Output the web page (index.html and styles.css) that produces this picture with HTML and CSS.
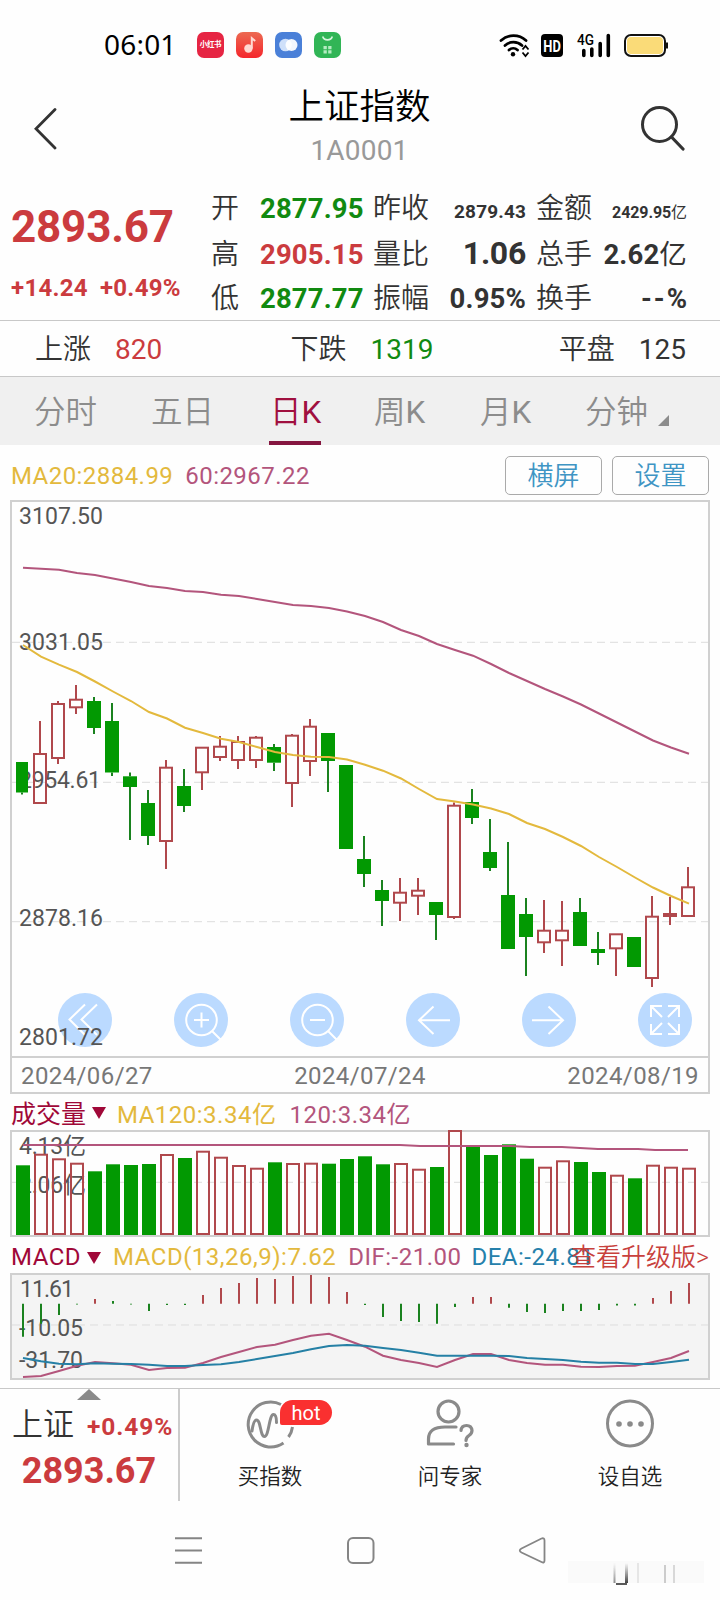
FILE: index.html
```html
<!DOCTYPE html>
<html lang="zh-CN">
<head>
<meta charset="utf-8">
<title>上证指数</title>
<link rel="stylesheet" href="styles.css">
</head>
<body>
<div class="screen">
  <div class="status">
    <span class="clock">06:01</span>
    <div class="apps">
      <span class="app app-red">小红书</span>
      <svg class="app-svg" viewBox="0 0 27 26"><defs><linearGradient id="mg" x2="0" y2="1"><stop offset="0" stop-color="#ec6a52"/><stop offset="1" stop-color="#f5262c"/></linearGradient></defs><rect width="27" height="26" rx="7" fill="url(#mg)"/><circle cx="12.4" cy="16.5" r="4.2" fill="#ffd9d2"/><path d="M15.8 16.5V6.2l3.4 2.8" fill="none" stroke="#ffd9d2" stroke-width="2"/></svg>
      <svg class="app-svg" viewBox="0 0 27 26"><rect width="27" height="26" rx="7" fill="#4a80d8"/><circle cx="10.5" cy="13" r="6.3" fill="#cfe0fa"/><circle cx="16.5" cy="13" r="6" fill="#fff" opacity=".93"/></svg>
      <svg class="app-svg" viewBox="0 0 27 26"><rect width="27" height="26" rx="7" fill="#31b556"/><path d="M8.7 4.5a5 4.6 0 0 0 9.6 0" fill="none" stroke="#d7f5de" stroke-width="1.7"/><path d="M9.5 14h3.3v3.3H9.5zM14.2 14h3.3v3.3h-3.3zM9.5 18.3h3.3v3.3H9.5zM14.2 18.3h3.3v3.3h-3.3z" fill="#b5ecc1"/></svg>
    </div>
    <svg class="signals" viewBox="498 30 172 28">
      <g fill="none" stroke="#000" stroke-width="2.8" stroke-linecap="round"><path d="M501 39.500a18.500 18.500 0 0 1 25 0M505 44.500a12.500 12.500 0 0 1 17 0M509 49a6.500 6.500 0 0 1 8.500 0"/></g>
      <circle cx="513" cy="53.300" r="2.200"/><path d="M522.500 48.500l3-3.500 3 3.500M522.500 51.500l3 3.500 3-3.500" fill="none" stroke="#000" stroke-width="1.800"/>
      <rect x="541" y="33" width="22" height="23" rx="4"/>
      <text x="543.300" y="50.500" font-size="16" font-weight="700" fill="#fff" textLength="17.500" lengthAdjust="spacingAndGlyphs">HD</text>
      <text x="577" y="43.500" font-size="14.500" font-weight="500" textLength="17" lengthAdjust="spacingAndGlyphs">4G</text>
      <path d="M583.800 49.500v5M591.800 48v6.500M600.200 42.500v12M608.300 34.500v20" stroke="#000" stroke-width="3.600" stroke-linecap="round"/>
      <rect x="625" y="34" width="40" height="21" rx="6" fill="#fff" stroke="#111" stroke-width="2"/><rect x="627" y="36" width="36" height="17" rx="4" fill="#fadb78"/><path d="M667 41.500v6" stroke="#111" stroke-width="2"/>
    </svg>
  </div>

  <header class="head">
    <svg class="back" viewBox="0 0 24 42"><path d="M21 1.500L2 20.800 21 40" fill="none" stroke="#333" stroke-width="2.800" stroke-linecap="round"/></svg>
    <div class="titles"><div class="title">上证指数</div><div class="code">1A0001</div></div>
    <svg class="search" viewBox="0 0 44 46"><circle cx="18.500" cy="18.500" r="17" fill="none" stroke="#333" stroke-width="3"/><path d="M30.500 31L42 43" stroke="#333" stroke-width="3.200" stroke-linecap="round"/></svg>
  </header>

  <section class="quote">
    <div class="price"><div class="last">2893.67</div><div class="change"><span>+14.24</span><span>+0.49%</span></div></div>
    <div class="stats">
      <span>开</span><b class="green">2877.95</b><span>昨收</span><b class="small">2879.43</b><span>金额</span><b class="tiny">2429.95<i>亿</i></b>
      <span>高</span><b class="red">2905.15</b><span>量比</span><b class="large">1.06</b><span>总手</span><b>2.62<i>亿</i></b>
      <span>低</span><b class="green">2877.77</b><span>振幅</span><b>0.95%</b><span>换手</span><b class="none">--%</b>
    </div>
  </section>

  <section class="breadth">
    <div><span>上涨</span><span class="count red">820</span></div>
    <div><span>下跌</span><span class="count green">1319</span></div>
    <div><span>平盘</span><span class="count">125</span></div>
  </section>

  <nav class="tabs">
    <span>分时</span><span>五日</span><span class="active">日<i>K</i></span><span>周<i>K</i></span><span>月<i>K</i></span><span>分钟<svg class="corner" viewBox="0 0 11 11"><path d="M11 0v11H0z" fill="#8c8c8c"/></svg></span>
  </nav>

  <div class="legend">
    <span class="gold">MA20:2884.99</span><span class="rose">60:2967.22</span>
    <div class="buttons"><span class="btn">横屏</span><span class="btn">设置</span></div>
  </div>

  <svg class="kline" viewBox="0 500 720 556">
    <path d="M12 642.300H708M12 782.300H708M12 921.700H708" class="grid"/>
    <g class="axis">
      <text x="19" y="524" textLength="84">3107.50</text><text x="19" y="650" textLength="84">3031.05</text><text x="19" y="787.700" textLength="82">2954.61</text><text x="19" y="926" textLength="84">2878.16</text>
    </g>
    <g id="candles"></g>
    <path id="ma60" class="line-rose"/><path id="ma20" class="line-gold"/>
    <g fill="#bbdaff"><circle cx="85" cy="1020" r="27"/><circle cx="201" cy="1020" r="27"/><circle cx="317" cy="1020" r="27"/><circle cx="433" cy="1020" r="27"/><circle cx="549" cy="1020" r="27"/><circle cx="665" cy="1020" r="27"/></g>
    <g fill="none" stroke="#fff" stroke-width="2">
      <path d="M85 1004.500L69.500 1019.500 85 1035M97 1004.500L81.500 1019.500 97 1035"/>
      <circle cx="201.500" cy="1020" r="15.300"/><path d="M212 1031l8.500 8.500M201.500 1012.500v15M194 1020h15"/>
      <circle cx="317.500" cy="1020" r="15.300"/><path d="M328 1031l8.500 8.500M310 1020h15"/>
      <path d="M433.500 1006.500L419 1020.300 433.500 1034M419 1020.300H450"/>
      <path d="M548.500 1006.500L563 1020.300 548.500 1034M563 1020.300H532"/>
      <path d="M651 1017v-11h11M651 1006l11 11M668 1006h11v11M679 1006l-11 11M651 1024v10h11M651 1034l11-11M668 1034h11v-10M679 1034l-11-11"/>
    </g>
    <g class="axis"><text x="19" y="1045" textLength="84">2801.72</text></g>
  </svg>
  <div class="dates"><span>2024/06/27</span><span>2024/07/24</span><span>2024/08/19</span></div>

  <div class="sub sub-vol"><span class="name name-vol">成交量</span><i class="down"></i><span class="gold vol-a">MA120:3.34亿</span><span class="rose">120:3.34亿</span></div>
  <svg class="volume" viewBox="0 1130 720 107">
    <path d="M12 1182.300H708" class="grid"/>
    <rect x="11" y="1131" width="698" height="105" class="frame"/>
    <g class="axis"><text x="19" y="1154" textLength="67">4.13亿</text><text x="19" y="1193" textLength="67">2.06亿</text></g>
    <g id="bars"></g>
    <path d="M23 1145H400L420 1146H510L530 1147H562L598 1149H638L655 1150H688" class="line-rose"/>
  </svg>

  <div class="sub sub-macd"><span class="name">MACD</span><i class="down"></i><span class="gold macd-a">MACD(13,26,9):7.62</span><span class="rose macd-b">DIF:-21.00</span><span class="blue">DEA:-24.81</span><span class="upgrade">查看升级版&gt;</span></div>
  <svg class="macd" viewBox="0 1273 720 107">
    <rect x="11" y="1274" width="698" height="105" fill="#f4f4f4"/>
    <path d="M12 1325H708" class="grid"/>
    <g class="axis"><text x="20" y="1296.700" textLength="54">11.61</text><text x="19" y="1336" textLength="64">-10.05</text><text x="19" y="1367.700" textLength="64">-31.70</text></g>
    <g id="hist"></g>
    <path id="dif" class="line-rose"/><path id="dea" class="line-blue"/>
    <rect x="11" y="1274" width="698" height="105" class="frame"/>
  </svg>

  <footer class="bottom">
    <div class="mini">
      <i class="up"></i>
      <div class="mini-top"><span>上证</span><b>+0.49%</b></div>
      <div class="mini-price">2893.67</div>
    </div>
    <div class="action">
      <svg viewBox="0 0 90 52"><g fill="none" stroke="#8a8a8a" stroke-width="3"><path d="M36 5.500A22.500 22.500 0 1 0 38.500 44M47.500 28a22 22 0 0 1-4 10"/><path d="M7 32c1-7 2.500-11 4.500-11 4.500 0 3.500 16.500 8 16.500S24 15.500 28.500 15.500c2 0 3 2.500 3 8" stroke-linecap="round"/></g></svg>
      <em class="hot">hot</em>
      <span>买指数</span>
    </div>
    <div class="action">
      <svg viewBox="0 0 90 52"><g fill="none" stroke="#8a8a8a" stroke-width="3.200" stroke-linecap="round" stroke-linejoin="round"><circle cx="23.500" cy="12.500" r="10.500"/><path d="M31 28H20Q3.500 28 3.500 40v5H28.500M36 31.500q.5-5 5.500-5t5.500 5q0 3-3 5t-3 5"/></g><circle cx="41.500" cy="46" r="2.200" fill="#8a8a8a"/></svg>
      <span>问专家</span>
    </div>
    <div class="action">
      <svg viewBox="0 0 90 52"><circle cx="25" cy="24.500" r="22.500" fill="none" stroke="#8a8a8a" stroke-width="3"/><g fill="#8a8a8a"><circle cx="14" cy="25" r="2.800"/><circle cx="25" cy="25" r="2.800"/><circle cx="36" cy="25" r="2.800"/></g></svg>
      <span>设自选</span>
    </div>
  </footer>

  <svg class="sysnav" viewBox="0 1501 720 99">
    <g fill="none" stroke="#858585" stroke-width="2"><path d="M175 1538.200h27M175 1550.500h27M175 1562.800h27"/><rect x="348" y="1538" width="25.500" height="25" rx="5"/><path d="M521.500 1548.500L541.500 1538.500Q544.500 1537.500 544.500 1540.500V1560.500Q544.500 1563.500 541.500 1562L521.500 1552.500Q518 1550.500 521.500 1548.500z" stroke-width="1.800"/></g>
    <defs><filter id="soft"><feGaussianBlur stdDeviation=".7"/></filter><linearGradient id="fade" x2="0" y2="1"><stop offset="0" stop-color="#555" stop-opacity="0"/><stop offset="1" stop-color="#444"/></linearGradient></defs>
    <rect x="568" y="1561" width="136" height="22" fill="#fafafa"/>
    <g filter="url(#soft)"><rect x="613.500" y="1563" width="2" height="20" fill="url(#fade)" opacity=".6"/><rect x="625" y="1563" width="3" height="20" fill="url(#fade)"/><rect x="637" y="1563" width="2" height="20" fill="#e6e6e6"/><rect x="664" y="1565" width="2" height="18" fill="#ccc"/><rect x="673" y="1565" width="2" height="18" fill="#d8d8d8"/></g>
    <path d="M616 1584h11" stroke="#222" stroke-width="1.500"/>
  </svg>
</div>
<script src="chart.js"></script>
</body>
</html>
```

FILE: styles.css
```css
* { box-sizing: border-box; }
body { margin: 0; background: #fff; color: #333; font-family: Roboto, "Noto Sans CJK SC", sans-serif; }
i, em { font-style: normal; }
svg { display: block; }
.screen { width: 720px; height: 1600px; overflow: hidden; background: #fefefe; display: flex; flex-direction: column; }
.screen > * { flex-shrink: 0; }
.red { color: #cb3b3e; }
.green { color: #118a11; }
.gold { color: #e3b93d; }
.rose { color: #b3557c; }
.blue { color: #2580ab; }

.status { height: 80px; display: flex; align-items: center; padding: 9px 50px 0 104px; }
.clock { font: 28px/28px "Noto Sans", Roboto, sans-serif; color: #000; width: 93px; letter-spacing: .2px; position: relative; top: -1px; }
.apps { display: flex; gap: 12px; }
.app, .app-svg { width: 27px; height: 26px; }
.app { border-radius: 7px; color: #fff; font-size: 7.5px; font-weight: 700; line-height: 26px; text-align: center; letter-spacing: -.3px; white-space: nowrap; }
.app-red { background: #e62543; }
.signals { width: 172px; height: 28px; margin-left: auto; }

.head { height: 106px; display: flex; align-items: flex-start; justify-content: space-between; padding: 0 35px 0 34px; }
.back { width: 24px; height: 42px; margin-top: 28px; }
.titles { text-align: center; padding: 1px 0 0 20px; }
.title { font-size: 35.5px; line-height: 52px; color: #000; font-weight: 350; }
.code { font-size: 28px; line-height: 36px; color: #999; letter-spacing: .2px; }
.search { width: 44px; height: 46px; margin-top: 26px; }

.quote { height: 135px; display: flex; border-bottom: 1px solid #c8c8c8; }
.price { width: 211px; padding-left: 11px; color: #cb3b3e; font-weight: 700; }
.last { font-size: 44px; line-height: 52px; margin-top: 15px; letter-spacing: -.2px; }
.change { display: flex; gap: 12px; font-size: 24px; line-height: 30px; margin-top: 20px; letter-spacing: .3px; }
.stats { display: grid; grid-template-columns: 49px 102px 68px 96px 67px 94px; grid-auto-rows: 45px; align-items: baseline; font-size: 28px; line-height: 45px; font-weight: 350; }
.stats span:nth-child(6n + 3) { padding-left: 11px; }
.stats span:nth-child(6n + 5) { padding-left: 10px; }
.stats b { font-size: 27.5px; text-align: right; white-space: nowrap; letter-spacing: .15px; }
.stats b i { font-weight: 400; }
.stats .small { font-size: 19px; }
.stats .tiny { font-size: 16px; letter-spacing: -.1px; }
.stats .large { font-size: 32px; letter-spacing: -.3px; }
.stats .none { letter-spacing: 2px; margin-right: -2px; }

.breadth { height: 56px; display: flex; justify-content: space-between; align-items: center; padding: 0 34px 0 35px; font-size: 28px; font-weight: 350; border-bottom: 1px solid #c8c8c8; }
.breadth div { display: flex; align-items: baseline; gap: 24px; padding-bottom: 3px; }
.breadth div:nth-child(2) { padding-left: 3px; }
.breadth .count { font-weight: 400; }

.tabs { height: 68px; background: #f0f0f0; display: grid; grid-template-columns: 117px 119px 104px 106px 105px 134px; padding-left: 34px; font-size: 31.5px; font-weight: 350; line-height: 72px; color: #8c8c8c; }
.tabs span { white-space: nowrap; }
.tabs i { font-weight: 400; }
.tabs .active { color: #a0103f; border-bottom: 4px solid #851640; justify-self: start; margin-left: -1px; padding-left: 1px; width: 52px; height: 68px; }
.corner { width: 11px; height: 11px; display: inline-block; margin-left: 10px; position: relative; top: 3px; }

.legend { height: 55px; display: flex; align-items: flex-start; padding: 10px 11px 0 11px; font-size: 24px; line-height: 42px; letter-spacing: .45px; gap: 12px; }
.buttons { display: flex; gap: 10px; margin-left: auto; letter-spacing: 0; }
.btn { width: 97px; height: 39px; border: 1.500px solid #aaa; border-radius: 5px; color: #3f95c4; font-size: 26px; font-weight: 350; line-height: 39px; text-align: center; margin-top: 1px; }

.kline { width: 720px; height: 556px; background: linear-gradient(#d0d0d0, #d0d0d0) 10px 0 / 2px 100% no-repeat, linear-gradient(#d0d0d0, #d0d0d0) 708px 0 / 2px 100% no-repeat, linear-gradient(#d0d0d0, #d0d0d0) 10px 0 / 700px 2px no-repeat; }
.dates { height: 38px; margin: 0 10px; border: 2px solid #d0d0d0; padding: 0 9px; display: flex; justify-content: space-between; font-size: 24px; line-height: 36px; color: #777; letter-spacing: .4px; }
.grid { stroke: #ddd; stroke-width: 1; stroke-dasharray: 8 5; }
.axis { fill: #555; font-size: 23px; }
.frame { fill: none; stroke: #d0d0d0; stroke-width: 2; }
.line-rose, .line-gold, .line-blue { fill: none; stroke-width: 2; }
.line-rose { stroke: #b3557c; }
.line-gold { stroke: #e3b93d; }
.line-blue { stroke: #2580a5; }

.sub { display: flex; align-items: center; padding-left: 11px; font-size: 24px; white-space: nowrap; letter-spacing: .5px; }
.sub-vol { height: 36px; }
.sub-macd { height: 36px; position: relative; padding-top: 4px; }
.name { color: #a00838; }
.name-vol { font-size: 25px; letter-spacing: 0; }
.down { border: 7px solid transparent; border-top: 12px solid #a00838; border-bottom: 0; margin: 2px 11px 0 6px; }
.vol-a { margin-right: 13px; }
.macd-a { margin: 0 12px 0 1px; }
.macd-b { margin-right: 10px; }
.upgrade { position: absolute; right: 11px; top: 3px; line-height: 36px; color: #c8403c; font-size: 25px; font-weight: 350; letter-spacing: 0; }
.volume, .macd { width: 720px; height: 107px; }

.bottom { height: 113px; margin-top: 8px; border-top: 1px solid #c8c8c8; display: flex; }
.mini { width: 180px; border-right: 2px solid #ccc; display: flex; flex-direction: column; align-items: center; }
.up { border: 12px solid transparent; border-bottom: 11px solid #8a8a8a; border-top: 0; }
.mini-top { display: flex; align-items: baseline; align-self: flex-start; gap: 13px; padding-left: 12px; font-size: 31px; font-weight: 350; line-height: 46px; margin-top: 2px; }
.mini-top b { font-size: 24.500px; color: #cb3b3e; letter-spacing: .9px; }
.mini-price { color: #cb3b3e; font-size: 36px; font-weight: 700; line-height: 44px; margin-top: -1px; }
.action { width: 180px; display: flex; flex-direction: column; align-items: center; position: relative; padding-top: 10px; font-size: 21.500px; font-weight: 350; line-height: 32px; }
.action svg { width: 90px; height: 52px; margin-left: 40px; }
.action span { margin-top: 10px; color: #222; }
.hot { position: absolute; left: 100px; top: 11px; width: 52px; height: 25px; border-radius: 13px 13px 13px 2px; background: #fa3030; color: #fff; font-size: 20px; font-weight: 400; line-height: 26px; text-align: center; }
.sysnav { width: 720px; height: 99px; }
```

FILE: chart.js
```js
const GREEN = '#029902', RED = '#b0484c';
const byId = id => document.getElementById(id);

// [rising, high, body top, body bottom, low]
const candles = [
  [0,762,762,792.5,794.5],[1,721,754,803,803],[1,701,704,758,764],[1,685,699.7,707.3,714],[0,697,701,728,734],
  [0,703,721,772.5,776],[0,772.5,776.3,787,840],[0,790,803,836,845],[1,760,767.7,841,869],[0,769,786,806,812],
  [1,747.7,747.7,772.3,790],[1,736,746.7,757,761],[1,736,742,760,769],[1,736,737.7,760,768],[0,744,747,762.7,771],
  [1,734,735.7,783,807],[1,719,726.7,761,776],[0,733,733,761,792],[0,765,765,849,849],[0,836,859,874,887],
  [0,880,890,901,926],[1,878,892.7,902.7,921],[1,878,890.7,895.7,915],[0,902,902,915,940],[1,802.5,805.7,917,919],
  [0,789,802,818,824],[0,819,852,868,871],[0,842,895,949,949],[0,898,914,937,976],[1,900,930.7,942.3,953],
  [1,901,930.7,940.3,966],[0,898,912,946,946],[0,932,949,953,965],[1,934,934.3,948.3,976],[0,937,937,967,967],
  [1,896,916.7,978,987],[1,897,914,916,925],[1,867,887.3,916,916]
];
byId('candles').innerHTML = candles.map(([up, h, t, b, l], i) => {
  const x = 22 + 18 * i, c = up ? RED : GREEN;
  const wick = `<path d="M${x} ${h}V${t}M${x} ${b}V${l}" stroke="${up ? RED : '#1a821f'}" stroke-width="2"/>`;
  const left = i ? x - 7 : 16, right = x + (i ? 7 : 6);
  return wick + (up
    ? `<rect x="${x - 6}" y="${t}" width="12" height="${b - t}" fill="none" stroke="${c}" stroke-width="2"/>`
    : `<rect x="${left}" y="${t}" width="${right - left}" height="${b - t}" fill="${c}"/>`);
}).join('');

const line = (id, x0, ys) => byId(id).setAttribute('d', 'M' + ys.map((y, i) => `${x0 + 18 * i} ${y}`).join('L'));
line('ma60', 23, [567.7,568.7,569.7,573,575,578.5,582,586,588,591,592,594.7,596,599,602,605,606,608,611.5,616,622,630,636,644,650,655.7,664,673,681,689,696.5,704.5,713.5,722.5,731.5,740.5,747.5,753.7]);
line('ma20', 23, [645,656.7,664.7,672,681.5,691.5,701,712,718.5,727.7,733,738.7,742,747,752,755,756.7,757,759.5,764.7,770.7,778.5,789,799,801.5,804.5,808.5,814,823,829,837,846,857,867,877.500,887.500,896,903.7]);

const volumes = [
  [0,1165.3],[1,1154.7],[1,1159.3],[1,1163.7],[0,1171.3],[0,1164.3],[0,1165],[0,1164],[1,1155],[0,1158],
  [1,1151.7],[1,1157.7],[1,1166],[1,1168.7],[0,1162.3],[1,1164],[1,1163.7],[0,1163.7],[0,1159],[0,1156.3],
  [0,1164.3],[1,1164],[1,1169.7],[0,1167],[1,1131],[0,1146],[0,1155],[0,1144.3],[0,1158.7],[1,1167.7],
  [1,1161.3],[0,1162],[0,1172],[1,1175.7],[0,1178.3],[1,1165.7],[1,1167.7],[1,1168.7]
];
byId('bars').innerHTML = volumes.map(([up, y], i) => {
  const x = 23 + 18 * i;
  return up
    ? `<rect x="${x - 6}" y="${y}" width="12" height="${1234 - y}" fill="none" stroke="${RED}" stroke-width="2"/>`
    : `<rect x="${x - 7}" y="${y}" width="14" height="${1235 - y}" fill="${GREEN}"/>`;
}).join('');

// [rising, end of the bar]
const zero = 1303.7;
const hist = [
  [0,1336.7],[0,1323.7],[0,1315],[0,1304.5],[1,1299],[0,1301],[0,1304.5],[0,1311],[0,1305],[0,1305],
  [1,1295],[1,1288],[1,1283],[1,1278],[1,1279],[1,1276],[1,1274],[1,1277],[1,1292],[0,1305],
  [0,1317],[0,1321],[0,1322],[0,1323.7],[0,1307],[1,1297],[1,1297],[0,1307.7],[0,1312],[0,1313],
  [0,1311],[0,1311],[0,1310],[0,1305.5],[0,1305.5],[1,1298],[1,1291],[1,1283]
];
byId('hist').innerHTML = hist.map(([up, y], i) =>
  `<path d="M${23 + 18 * i} ${zero}V${y}" stroke="${up ? RED : '#1a821f'}" stroke-width="2"/>`).join('');

line('dif', 23, [1377,1376,1371,1365.7,1362,1363.3,1364.7,1370,1368,1367.7,1363,1357,1352,1347,1344.7,1340,1335.7,1333.7,1340,1346.7,1355.7,1360,1363,1367,1360,1354,1354,1360,1363,1364.7,1364.7,1366.7,1367,1366,1365.7,1362,1358,1351]);
line('dea', 23, [1358,1361.3,1363.7,1364.3,1363.3,1363.7,1364,1364.7,1366,1366,1365,1364.3,1362,1359,1356,1353,1349.3,1346,1345,1345.7,1348,1350,1352.7,1355.7,1355.7,1355.7,1355.7,1356,1358,1359,1360,1361.7,1362.7,1362.7,1364,1364,1362,1359.7]);
```
